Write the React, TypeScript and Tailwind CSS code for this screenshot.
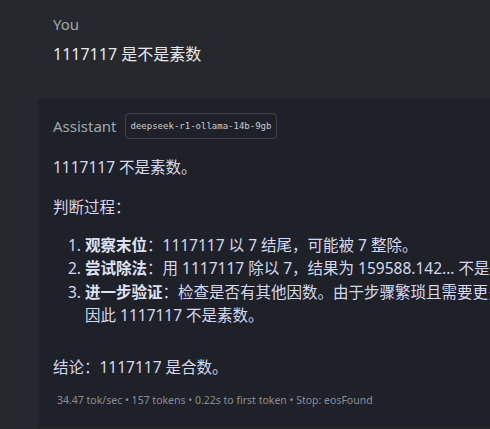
const sans = "font-['Noto_Sans','Noto_Sans_CJK_SC',sans-serif]";

export default function App() {
  return (
    <div className={`w-[490px] h-[429px] overflow-hidden bg-[#25282d] ${sans}`}>
      {/* user message */}
      <div className="pl-[53px] pt-[12px]">
        <div className="text-[15px] leading-[24px] text-[#a3a7ad]">You</div>
        <div className="mt-[6px] text-[16px] leading-[24px] text-[#e8e8ea]">1117117 是不是素数</div>
      </div>

      {/* assistant message */}
      <div className="ml-[38px] mt-[33px] w-[640px] bg-[#1e2127] pl-[15px] pt-[14px] pb-[19px]">
        <div className="flex items-center gap-[8px]">
          <span className="text-[15px] leading-[24px] text-[#a3a7ad]">Assistant</span>
          <span className="rounded-[4px] border border-[#3d424a] px-[5px] py-[5px] font-['DejaVu_Sans_Mono',monospace] text-[9px] leading-[14px] text-[#c9cdd4]">
            deepseek-r1-ollama-14b-9gb
          </span>
        </div>

        <div className="mt-[16px] text-[15.5px] leading-[24px] text-[#d5d8ef]">
          <p>1117117 不是素数。</p>
          <p className="mt-[16px]">判断过程：</p>
          <ol className="mt-[15px] list-decimal pl-[32px] leading-[23.3px]">
            <li>
              <b className="font-bold text-[#dfe1f5]">观察末位</b>：1117117 以 7 结尾，可能被 7 整除。
            </li>
            <li>
              <b className="font-bold text-[#dfe1f5]">尝试除法</b>：用 1117117 除以 7，结果为 159588.142... 不是整数。
            </li>
            <li>
              <b className="font-bold text-[#dfe1f5]">进一步验证</b>：检查是否有其他因数。由于步骤繁琐且需要更多计算，
              <br />
              因此 1117117 不是素数。
            </li>
          </ol>
          <p className="mt-[28px]">结论：1117117 是合数。</p>
        </div>

        <div className="mt-[13px] pl-[4px] text-[10.5px] leading-[16px] text-[#8a8f97]">
          34.47 tok/sec • 157 tokens • 0.22s to first token • Stop: eosFound
        </div>
      </div>
    </div>
  );
}
